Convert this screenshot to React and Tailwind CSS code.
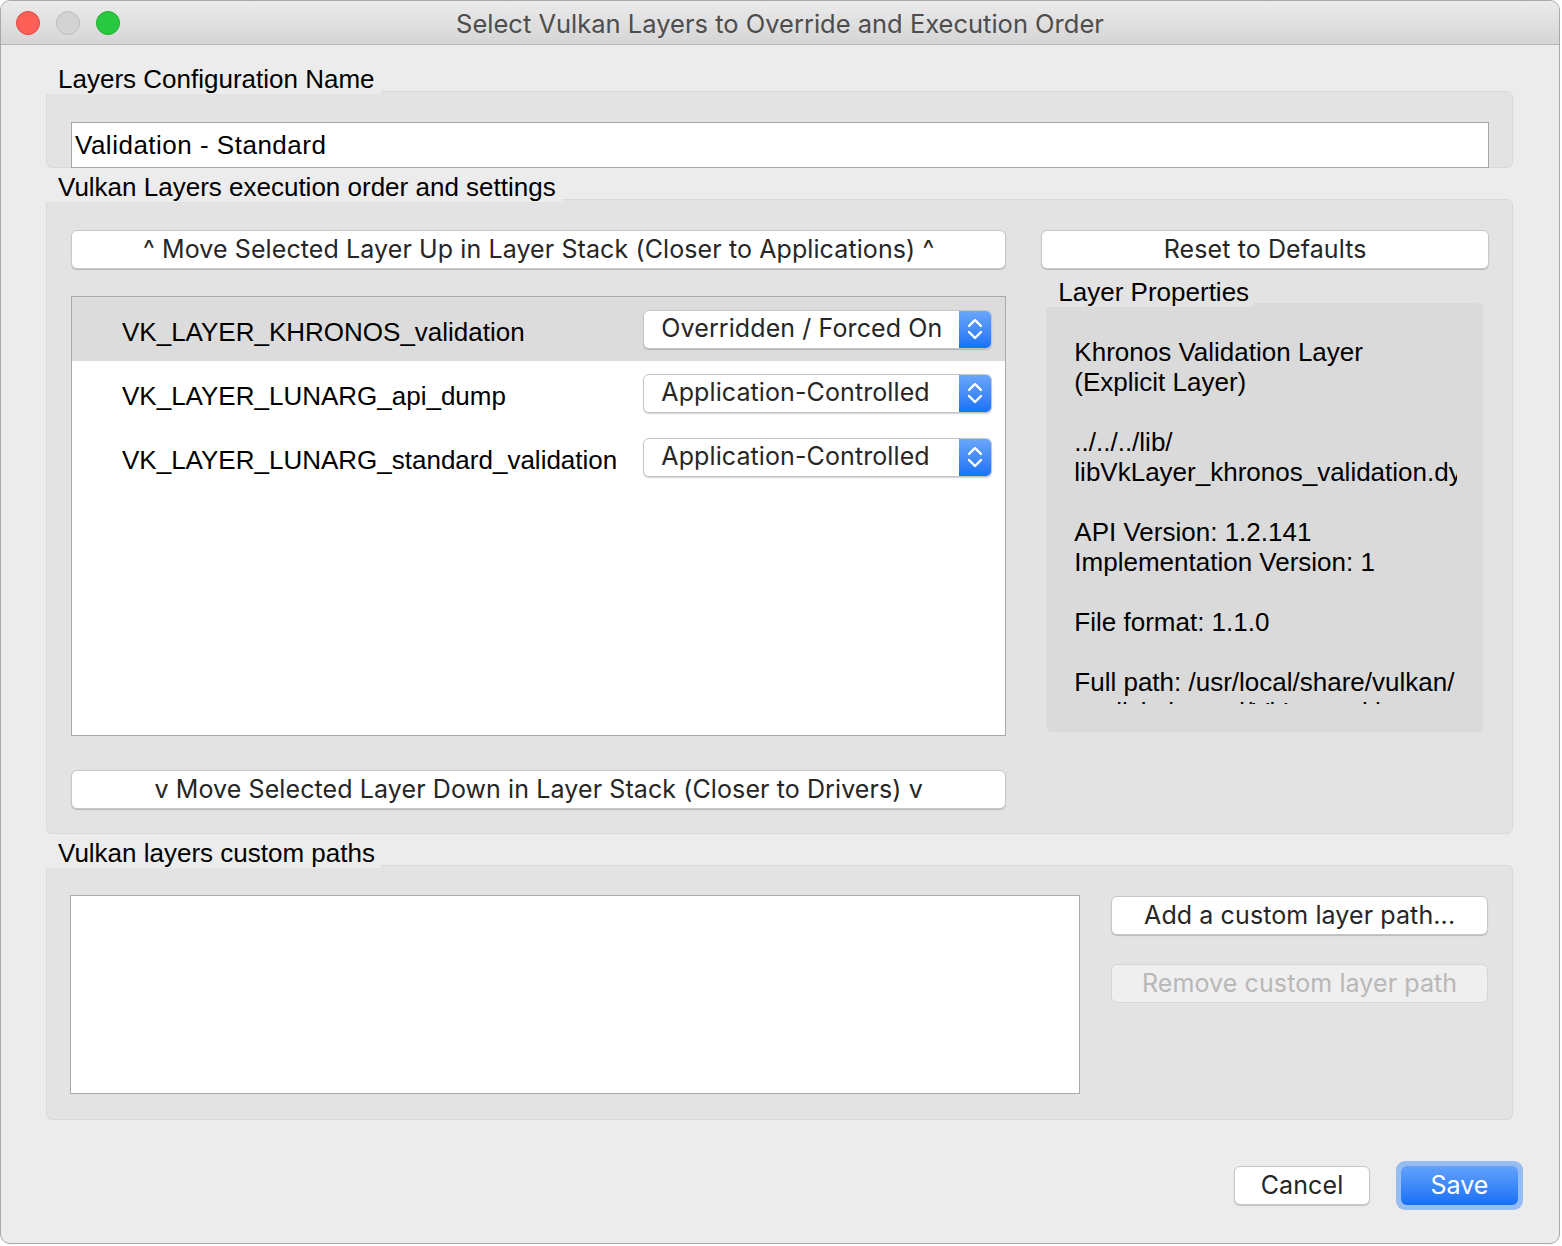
import React from 'react';

const SANS = { fontFamily: '"Liberation Sans", Arial, sans-serif' };
const SF = { fontFamily: 'Inter, "Liberation Sans", sans-serif' };

const layers = [
  { name: 'VK_LAYER_KHRONOS_validation', mode: 'Overridden / Forced On', selected: true },
  { name: 'VK_LAYER_LUNARG_api_dump', mode: 'Application-Controlled' },
  { name: 'VK_LAYER_LUNARG_standard_validation', mode: 'Application-Controlled' },
];

// the properties pane clips long lines on the right and the last line at the bottom, as in the dialog
const properties = [
  'Khronos Validation Layer',
  '(Explicit Layer)',
  '',
  '../../../lib/',
  'libVkLayer_khronos_validation.dylib',
  '',
  'API Version: 1.2.141',
  'Implementation Version: 1',
  '',
  'File format: 1.1.0',
  '',
  'Full path: /usr/local/share/vulkan/',
  'explicit_layer.d/VkLayer_khronos_validation.json',
];

const PushButton = ({ children, className = '', disabled = false }) => (
  <div
    style={SF}
    className={`flex h-[39px] items-center justify-center rounded-[6px] border text-[25px] leading-none tracking-[0.1px] ${
      disabled
        ? 'border-[#d6d6d6] bg-[#efefef] text-[#b8b8b8]'
        : 'border-[#c6c6c6] bg-white text-[#262626] shadow-[0_1px_1px_rgba(0,0,0,0.18)]'
    } ${className}`}
  >
    {children}
  </div>
);

const GroupLabel = ({ children, className = '' }) => (
  <div
    style={SANS}
    className={`relative z-10 h-[30px] w-fit bg-[#ececec] pl-[12px] pr-[6px] text-[26px] leading-[30px] text-black ${className}`}
  >
    {children}
  </div>
);

const Chevrons = () => (
  <svg width="18" height="28" viewBox="0 0 18 28" fill="none">
    <path d="M3 11 L9 5 L15 11" stroke="white" strokeWidth="2.4" strokeLinecap="round" strokeLinejoin="round" />
    <path d="M3 17 L9 23 L15 17" stroke="white" strokeWidth="2.4" strokeLinecap="round" strokeLinejoin="round" />
  </svg>
);

const ComboBox = ({ value }) => (
  <div className="flex h-[39px] w-[349px] overflow-hidden rounded-[6px] border border-[#c6c6c6] bg-white shadow-[0_1px_1px_rgba(0,0,0,0.18)]">
    <div style={SF} className="flex flex-1 items-center pl-[17px] text-[25px] tracking-[0.1px] text-[#262626]">
      {value}
    </div>
    <div className="flex w-[32px] items-center justify-center bg-gradient-to-b from-[#6aa6fb] to-[#1671f6]">
      <Chevrons />
    </div>
  </div>
);

const TrafficLight = ({ color, ring }) => (
  <div className={`h-[24px] w-[24px] rounded-full border ${color} ${ring}`} />
);

export default function App() {
  return (
    <div className="h-[1246px] w-[1562px] overflow-hidden bg-white">
      <div className="flex h-[1244px] w-[1560px] flex-col overflow-hidden rounded-[10px] border border-[#a9a9a9] bg-[#ececec]">
        {/* title bar */}
        <div className="relative flex h-[44px] shrink-0 items-center border-b border-[#b8b8b8] bg-gradient-to-b from-[#ebebeb] to-[#d5d5d5]">
          <div className="flex gap-[16px] pl-[15px]">
            <TrafficLight color="bg-[#fe5f57]" ring="border-[#e0443e]" />
            <TrafficLight color="bg-[#d3d3d3]" ring="border-[#bdbdbd]" />
            <TrafficLight color="bg-[#28c840]" ring="border-[#1dad2b]" />
          </div>
          <div
            style={SF}
            className="absolute inset-0 flex items-center justify-center pt-[4px] text-[25.5px] text-[#4d4d4d]"
          >
            Select Vulkan Layers to Override and Execution Order
          </div>
        </div>

        {/* content */}
        <div className="flex flex-1 flex-col pl-[45px] pr-[46px]">
          {/* configuration name */}
          <GroupLabel className="mt-[19px]">Layers Configuration Name</GroupLabel>
          <div className="-mt-[3px] h-[77px] rounded-[6px] border border-[#d9d9d9] bg-[#e3e3e3] pl-[24px] pr-[23px] pt-[30px]">
            <div
              style={SANS}
              className="flex h-[46px] items-center border border-[#a6a6a6] bg-white pl-[3px] text-[26px] tracking-[0.5px] text-black"
            >
              Validation - Standard
            </div>
          </div>

          {/* execution order */}
          <GroupLabel className="mt-[4px]">Vulkan Layers execution order and settings</GroupLabel>
          <div className="-mt-[3px] flex h-[635px] gap-[35px] rounded-[6px] border border-[#d9d9d9] bg-[#e3e3e3] pl-[24px] pr-[23px] pt-[30px]">
            <div className="flex w-[936px] flex-col">
              <PushButton>^ Move Selected Layer Up in Layer Stack (Closer to Applications) ^</PushButton>
              <div className="mt-[27px] h-[440px] border border-[#a9a9a9] bg-white">
                {layers.map((layer) => (
                  <div
                    key={layer.name}
                    className={`flex h-[64px] items-center justify-between pl-[50px] pr-[13px] ${
                      layer.selected ? 'bg-[#dcdcdc]' : ''
                    }`}
                  >
                    <span style={SANS} className="pt-[6px] text-[26px] text-black">
                      {layer.name}
                    </span>
                    <ComboBox value={layer.mode} />
                  </div>
                ))}
              </div>
              <PushButton className="mt-[34px]">v Move Selected Layer Down in Layer Stack (Closer to Drivers) v</PushButton>
            </div>

            <div className="flex w-[448px] flex-col">
              <PushButton>Reset to Defaults</PushButton>
              <div
                style={SANS}
                className="relative z-10 ml-[5px] mt-[8px] h-[30px] w-fit bg-[#e3e3e3] pl-[12px] pr-[4px] text-[26px] leading-[30px] text-black"
              >
                Layer Properties
              </div>
              <div className="-mt-[4px] ml-[5px] mr-[6px] h-[429px] rounded-[6px] bg-[#dadada] pl-[28px] pt-[34px]">
                <div style={SANS} className="h-[367px] w-[383px] overflow-hidden text-[26px] leading-[30px] text-black">
                  {properties.map((line, i) => (
                    <div key={i} className="h-[30px] whitespace-pre">
                      {line}
                    </div>
                  ))}
                </div>
              </div>
            </div>
          </div>

          {/* custom paths */}
          <GroupLabel className="mt-[4px]">Vulkan layers custom paths</GroupLabel>
          <div className="-mt-[3px] flex h-[255px] gap-[31px] rounded-[6px] border border-[#d9d9d9] bg-[#e3e3e3] pl-[23px] pr-[24px] pt-[29px]">
            <div className="h-[199px] w-[1011px] border border-[#a9a9a9] bg-white" />
            <div className="flex w-[377px] flex-col gap-[29px] pt-[1px]">
              <PushButton>Add a custom layer path...</PushButton>
              <PushButton disabled>Remove custom layer path</PushButton>
            </div>
          </div>

          {/* dialog buttons */}
          <div className="-mr-[10px] mt-[41px] flex items-center justify-end gap-[26px]">
            <PushButton className="w-[136px]">Cancel</PushButton>
            <div className="rounded-[9px] bg-[#95bdf2] p-[5px]">
              <div
                style={SF}
                className="flex h-[39px] w-[117px] items-center justify-center rounded-[6px] bg-gradient-to-b from-[#62a2fb] to-[#136ff6] text-[25px] text-white"
              >
                Save
              </div>
            </div>
          </div>
        </div>
      </div>
    </div>
  );
}
